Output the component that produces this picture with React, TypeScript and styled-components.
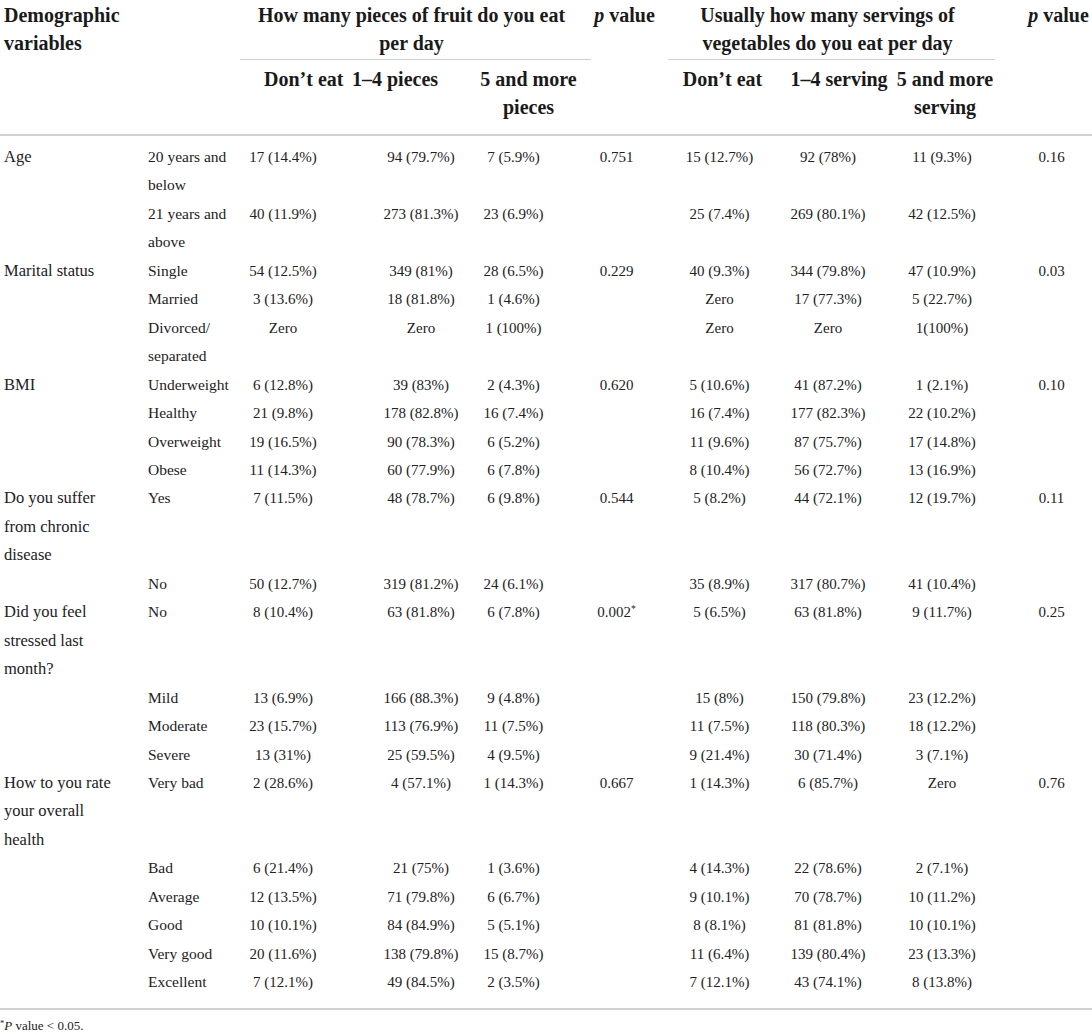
import React from "react";
import styled, { createGlobalStyle } from "styled-components";

const GlobalStyle = createGlobalStyle`
  html, body { margin: 0; padding: 0; background: #ffffff; }
  body { font-family: "Liberation Serif", "DejaVu Serif", serif; color: #222; }
`;

const Page = styled.div`
  width: 1092px;
  background: #fff;
`;

const Table = styled.div`
  display: grid;
  grid-template-columns: 148px 92px 90px 140px 121px 77px 107px 120px 100px 97px;
  padding-top: 1px;
`;

const shiftPad = (s: number) =>
  s >= 0 ? `padding-left: ${2 * s}px; padding-right: 0;` : `padding-right: ${-2 * s}px; padding-left: 0;`;

const HeadCell = styled.div<{ $col: string; $row: string; $shift?: number; $left?: boolean }>`
  grid-column: ${(p) => p.$col};
  grid-row: ${(p) => p.$row};
  font-family: "Liberation Serif", serif;
  font-weight: 700;
  font-size: 20px;
  line-height: 28px;
  color: #1a1a1a;
  white-space: nowrap;
  text-align: ${(p) => (p.$left ? "left" : "center")};
  ${(p) => (p.$left ? "padding-left: 4px;" : shiftPad(p.$shift ?? 0))}
`;

const GroupHead = styled(HeadCell)`
  padding-bottom: 2px;
  border-bottom: 1px solid #cfcfcf;
`;

const SubHead = styled(HeadCell)`
  padding-top: 5px;
  padding-bottom: 13px;
`;

const Rule = styled.div<{ $gapBefore?: number; $gapAfter?: number }>`
  grid-column: 1 / -1;
  height: 2px;
  background: #d2d2d2;
  margin-top: ${(p) => p.$gapBefore ?? 0}px;
  margin-bottom: ${(p) => p.$gapAfter ?? 0}px;
`;

const Cell = styled.div<{ $shift?: number; $left?: boolean; $indent?: number; $size?: number }>`
  font-family: "Liberation Serif", serif;
  font-size: ${(p) => p.$size ?? 15}px;
  line-height: 28.45px;
  color: #222;
  white-space: nowrap;
  text-align: ${(p) => (p.$left ? "left" : "center")};
  ${(p) => (p.$left ? `padding-left: ${p.$indent ?? 0}px;` : shiftPad(p.$shift ?? 0))}
`;

const Sup = styled.sup`
  font-size: 0.65em;
  line-height: 0;
  vertical-align: 0.5em;
`;

const Footnote = styled.div`
  font-family: "Liberation Serif", serif;
  font-size: 13px;
  line-height: 17px;
  color: #222;
  padding: 7px 0 0 0;
`;

type Row = {
  label?: React.ReactNode;
  sub: React.ReactNode;
  vals: string[];
};

const dataShift = [-2, 21, -17, -13, -2, -7, -3, 8];

const rows: Row[] = [
  { label: "Age", sub: <>20 years and<br />below</>, vals: ["17 (14.4%)", "94 (79.7%)", "7 (5.9%)", "0.751", "15 (12.7%)", "92 (78%)", "11 (9.3%)", "0.16"] },
  { sub: <>21 years and<br />above</>, vals: ["40 (11.9%)", "273 (81.3%)", "23 (6.9%)", "", "25 (7.4%)", "269 (80.1%)", "42 (12.5%)", ""] },
  { label: "Marital status", sub: "Single", vals: ["54 (12.5%)", "349 (81%)", "28 (6.5%)", "0.229", "40 (9.3%)", "344 (79.8%)", "47 (10.9%)", "0.03"] },
  { sub: "Married", vals: ["3 (13.6%)", "18 (81.8%)", "1 (4.6%)", "", "Zero", "17 (77.3%)", "5 (22.7%)", ""] },
  { sub: <>Divorced/<br />separated</>, vals: ["Zero", "Zero", "1 (100%)", "", "Zero", "Zero", "1(100%)", ""] },
  { label: "BMI", sub: "Underweight", vals: ["6 (12.8%)", "39 (83%)", "2 (4.3%)", "0.620", "5 (10.6%)", "41 (87.2%)", "1 (2.1%)", "0.10"] },
  { sub: "Healthy", vals: ["21 (9.8%)", "178 (82.8%)", "16 (7.4%)", "", "16 (7.4%)", "177 (82.3%)", "22 (10.2%)", ""] },
  { sub: "Overweight", vals: ["19 (16.5%)", "90 (78.3%)", "6 (5.2%)", "", "11 (9.6%)", "87 (75.7%)", "17 (14.8%)", ""] },
  { sub: "Obese", vals: ["11 (14.3%)", "60 (77.9%)", "6 (7.8%)", "", "8 (10.4%)", "56 (72.7%)", "13 (16.9%)", ""] },
  { label: <>Do you suffer<br />from chronic<br />disease</>, sub: "Yes", vals: ["7 (11.5%)", "48 (78.7%)", "6 (9.8%)", "0.544", "5 (8.2%)", "44 (72.1%)", "12 (19.7%)", "0.11"] },
  { sub: "No", vals: ["50 (12.7%)", "319 (81.2%)", "24 (6.1%)", "", "35 (8.9%)", "317 (80.7%)", "41 (10.4%)", ""] },
  { label: <>Did you feel<br />stressed last<br />month?</>, sub: "No", vals: ["8 (10.4%)", "63 (81.8%)", "6 (7.8%)", "0.002*", "5 (6.5%)", "63 (81.8%)", "9 (11.7%)", "0.25"] },
  { sub: "Mild", vals: ["13 (6.9%)", "166 (88.3%)", "9 (4.8%)", "", "15 (8%)", "150 (79.8%)", "23 (12.2%)", ""] },
  { sub: "Moderate", vals: ["23 (15.7%)", "113 (76.9%)", "11 (7.5%)", "", "11 (7.5%)", "118 (80.3%)", "18 (12.2%)", ""] },
  { sub: "Severe", vals: ["13 (31%)", "25 (59.5%)", "4 (9.5%)", "", "9 (21.4%)", "30 (71.4%)", "3 (7.1%)", ""] },
  { label: <>How to you rate<br />your overall<br />health</>, sub: "Very bad", vals: ["2 (28.6%)", "4 (57.1%)", "1 (14.3%)", "0.667", "1 (14.3%)", "6 (85.7%)", "Zero", "0.76"] },
  { sub: "Bad", vals: ["6 (21.4%)", "21 (75%)", "1 (3.6%)", "", "4 (14.3%)", "22 (78.6%)", "2 (7.1%)", ""] },
  { sub: "Average", vals: ["12 (13.5%)", "71 (79.8%)", "6 (6.7%)", "", "9 (10.1%)", "70 (78.7%)", "10 (11.2%)", ""] },
  { sub: "Good", vals: ["10 (10.1%)", "84 (84.9%)", "5 (5.1%)", "", "8 (8.1%)", "81 (81.8%)", "10 (10.1%)", ""] },
  { sub: "Very good", vals: ["20 (11.6%)", "138 (79.8%)", "15 (8.7%)", "", "11 (6.4%)", "139 (80.4%)", "23 (13.3%)", ""] },
  { sub: "Excellent", vals: ["7 (12.1%)", "49 (84.5%)", "2 (3.5%)", "", "7 (12.1%)", "43 (74.1%)", "8 (13.8%)", ""] },
];

const renderVal = (v: string) =>
  v.endsWith("*") ? (
    <>
      {v.slice(0, -1)}
      <Sup>*</Sup>
    </>
  ) : (
    v
  );

export default function App() {
  return (
    <Page>
      <GlobalStyle />
      <Table>
        <HeadCell $col="1 / 3" $row="1 / 3" $left>
          Demographic
          <br />
          variables
        </HeadCell>
        <GroupHead $col="3 / 6" $row="1" $shift={-4}>
          How many pieces of fruit do you eat
          <br />
          per day
        </GroupHead>
        <HeadCell $col="6" $row="1 / 3" $shift={-5}>
          <i>p</i> value
        </HeadCell>
        <GroupHead $col="7 / 10" $row="1" $shift={-4}>
          Usually how many servings of
          <br />
          vegetables do you eat per day
        </GroupHead>
        <HeadCell $col="10" $row="1 / 3" $shift={15}>
          <i>p</i> value
        </HeadCell>

        <SubHead $col="3" $row="2" $shift={12}>
          Don’t eat
        </SubHead>
        <SubHead $col="4" $row="2" $shift={-5}>
          1–4 pieces
        </SubHead>
        <SubHead $col="5" $row="2" $shift={-2}>
          5 and more
          <br />
          pieces
        </SubHead>
        <SubHead $col="7" $row="2" $shift={1}>
          Don’t eat
        </SubHead>
        <SubHead $col="8" $row="2" $shift={4}>
          1–4 serving
        </SubHead>
        <SubHead $col="9" $row="2" $shift={0}>
          5 and more
          <br />
          serving
        </SubHead>

        <Rule $gapAfter={7} />

        {rows.map((r, i) => (
          <React.Fragment key={i}>
            <Cell $left $indent={4} $size={16.5}>{r.label ?? ""}</Cell>
            <Cell $left $size={15.5}>{r.sub}</Cell>
            {r.vals.map((v, j) => (
              <Cell key={j} $shift={dataShift[j]}>
                {renderVal(v)}
              </Cell>
            ))}
          </React.Fragment>
        ))}

        <Rule $gapBefore={11} />
      </Table>
      <Footnote>
        <Sup>*</Sup>
        <i>P</i> value &lt; 0.05.
      </Footnote>
    </Page>
  );
}
